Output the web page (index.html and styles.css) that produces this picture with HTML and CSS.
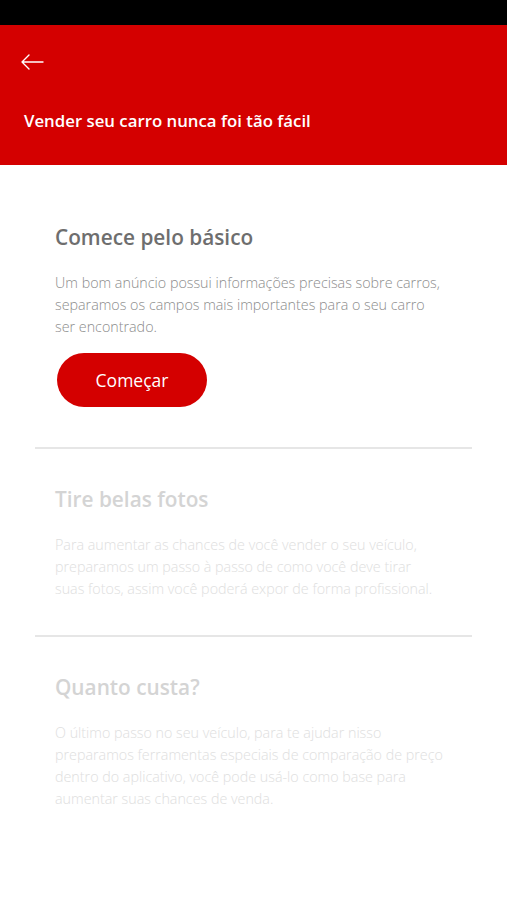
FILE: index.html
```html
<!DOCTYPE html>
<html>
<head>
  <title>Vender - Começar</title>
  <link rel="stylesheet" href="styles.css">
</head>
<body>
  <div class="status-bar"></div>
  <header class="appbar">
    <button class="back" aria-label="Voltar">
      <svg width="24" height="16" viewBox="0 0 24 16">
        <path d="M23 8H2M9 1L2 8l7 7" fill="none" stroke="#fff" stroke-width="1.4" stroke-linecap="round" stroke-linejoin="round"/>
      </svg>
    </button>
    <h1>Vender seu carro nunca foi tão fácil</h1>
  </header>
  <main>
    <section class="step">
      <h2>Comece pelo básico</h2>
      <p>Um bom anúncio possui informações precisas sobre carros,<br>
        separamos os campos mais importantes para o seu carro<br>
        ser encontrado.</p>
      <button class="start">Começar</button>
    </section>
    <section class="step disabled">
      <h2>Tire belas fotos</h2>
      <p>Para aumentar as chances de você vender o seu veículo,<br>
        preparamos um passo à passo de como você deve tirar<br>
        suas fotos, assim você poderá expor de forma profissional.</p>
    </section>
    <section class="step disabled last">
      <h2>Quanto custa?</h2>
      <p>O último passo no seu veículo, para te ajudar nisso<br>
        preparamos ferramentas especiais de comparação de preço<br>
        dentro do aplicativo, você pode usá-lo como base para<br>
        aumentar suas chances de venda.</p>
    </section>
  </main>
</body>
</html>
```

FILE: styles.css
```css
body {
  font-family: 'Open Sans', 'Noto Sans', sans-serif;
  margin: 0;
  padding: 0;
  background: #fff;
  color: #6e6e6e;
}
.status-bar {
  height: 25px;
  background: #000;
}
.appbar {
  background: #d40000;
  color: #fff;
  height: 140px;
  box-sizing: border-box;
  padding: 26px 24px 0;
}
.back {
  display: block;
  background: none;
  border: none;
  padding: 0;
  margin-left: -4px;
  width: 24px;
  height: 20px;
  cursor: pointer;
}
.back svg {
  display: block;
  margin: 2px 0 0;
}
.appbar h1 {
  margin: 38px 0 0;
  font-size: 16.8px;
  font-weight: 600;
  line-height: 24px;
}
main {
  padding: 21px 35px 0 35px;
}
.step {
  padding: 36px 0 35px 20px;
  border-bottom: 2px solid #e6e6e6;
}
.step:first-child {
  padding-top: 37px;
}
.step.last {
  border-bottom: none;
}
.step h2 {
  margin: 0;
  font-size: 20.8px;
  font-weight: 600;
  line-height: 28px;
  color: #6e6e6e;
}
.step p {
  margin: 21px 0 0;
  font-size: 14.3px;
  font-weight: 300;
  line-height: 22px;
  white-space: nowrap;
  color: #8c8c8c;
}
.step.disabled h2 {
  color: #d4d4d4;
}
.step.disabled p {
  color: #dedede;
}
.start {
  display: block;
  margin: 15px 0 5px 2px;
  width: 150px;
  height: 54px;
  border: none;
  border-radius: 27px;
  background: #d40000;
  color: #fff;
  font-family: inherit;
  font-size: 17.5px;
  cursor: pointer;
}
```
